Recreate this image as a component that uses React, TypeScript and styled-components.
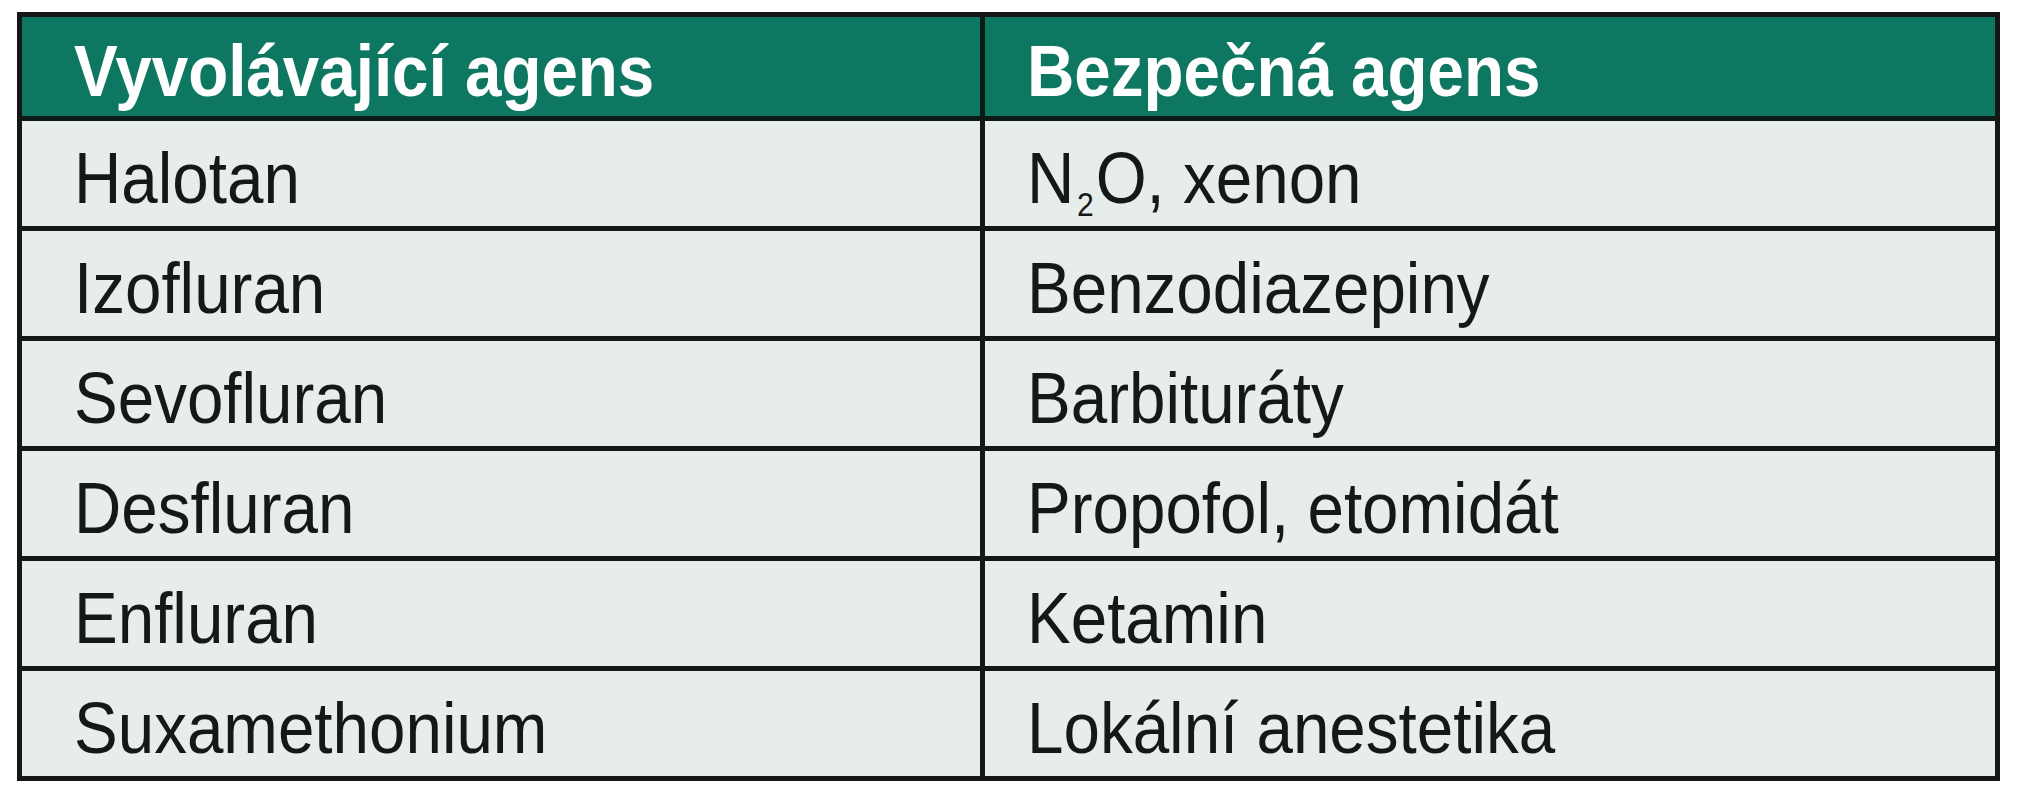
import React from "react";
import styled, { createGlobalStyle } from "styled-components";

const GlobalStyle = createGlobalStyle`
  html, body {
    margin: 0;
    padding: 0;
    background: #ffffff;
  }
  body {
    font-family: "Liberation Sans", Arial, sans-serif;
  }
`;

const Page = styled.div`
  padding: 12px 0 0 17px;
`;

const Table = styled.table`
  width: 1983px;
  table-layout: fixed;
  border-collapse: separate;
  border-spacing: 0;
  border: 5px solid #141716;
  background: #e7edea;
`;

const HeadCell = styled.th<{ $first?: boolean }>`
  width: ${(p) => (p.$first ? "963px" : "auto")};
  height: 104px;
  padding: ${(p) => (p.$first ? "8px 0 0 52px" : "8px 0 0 42px")};
  box-sizing: border-box;
  background: #0e7762;
  color: #ffffff;
  font-weight: 700;
  font-size: 72px;
  text-align: left;
  vertical-align: middle;
  white-space: nowrap;
  border-bottom: 5px solid #0a1b17;
  border-right: ${(p) => (p.$first ? "5px solid #0a1b17" : "none")};
`;

const Cell = styled.td<{ $first?: boolean; $last?: boolean }>`
  height: ${(p) => (p.$last ? "105px" : "110px")};
  padding: ${(p) => (p.$first ? "8px 0 0 52px" : "8px 0 0 42px")};
  box-sizing: border-box;
  color: #161817;
  font-size: 72px;
  vertical-align: middle;
  white-space: nowrap;
  border-bottom: ${(p) => (p.$last ? "none" : "5px solid #161817")};
  border-right: ${(p) => (p.$first ? "5px solid #161817" : "none")};
`;

// the source font is a narrow grotesque, so the text is squeezed a little
const Label = styled.span`
  display: inline-block;
  transform: scaleX(0.91);
  transform-origin: left center;
  line-height: 1;
`;

const Sub = styled.span`
  font-size: 0.46em;
  position: relative;
  top: 0.42em;
  margin: 0 2px 0 3px;
`;

const rows: [React.ReactNode, React.ReactNode][] = [
  ["Halotan", <>N<Sub>2</Sub>O, xenon</>],
  ["Izofluran", "Benzodiazepiny"],
  ["Sevofluran", "Barbituráty"],
  ["Desfluran", "Propofol, etomidát"],
  ["Enfluran", "Ketamin"],
  ["Suxamethonium", "Lokální anestetika"],
];

export default function App() {
  return (
    <>
      <GlobalStyle />
      <Page>
        <Table>
          <thead>
            <tr>
              <HeadCell $first>
                <Label>Vyvolávající agens</Label>
              </HeadCell>
              <HeadCell>
                <Label>Bezpečná agens</Label>
              </HeadCell>
            </tr>
          </thead>
          <tbody>
            {rows.map(([bad, safe], i) => {
              const last = i === rows.length - 1;
              return (
                <tr key={i}>
                  <Cell $first $last={last}>
                    <Label>{bad}</Label>
                  </Cell>
                  <Cell $last={last}>
                    <Label>{safe}</Label>
                  </Cell>
                </tr>
              );
            })}
          </tbody>
        </Table>
      </Page>
    </>
  );
}
